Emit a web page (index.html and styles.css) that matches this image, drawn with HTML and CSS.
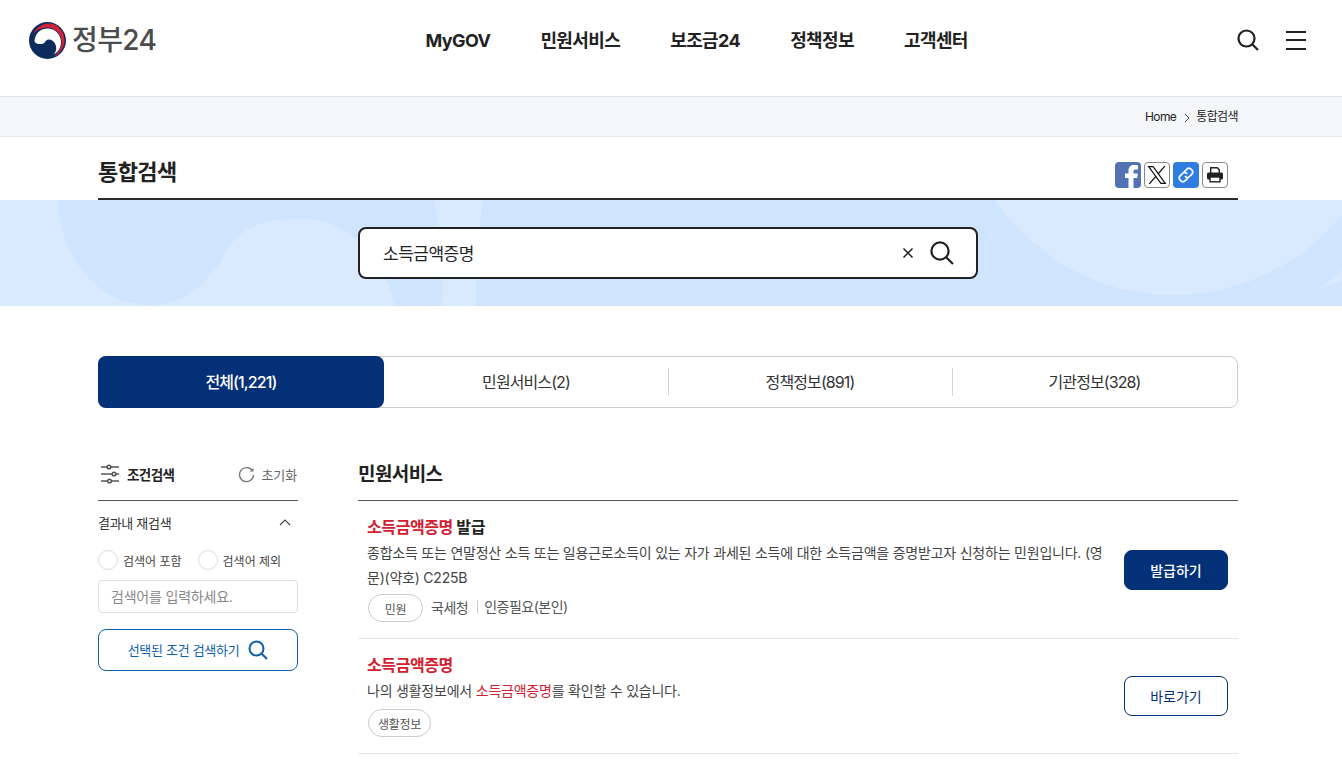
FILE: index.html
```html
<!DOCTYPE html>
<html lang="ko">
<head>
    <meta charset="UTF-8">
    <meta name="viewport" content="width=device-width, initial-scale=1.0">
    <title>정부24 통합검색</title>
    <link rel="stylesheet" href="styles.css">
</head>
<body>
    <!-- Header -->
    <header class="site-header">
        <a class="logo" href="#">
            <svg class="logo-mark" width="37" height="37" viewBox="0 0 37 37">
                <circle cx="18.5" cy="18.5" r="18.5" fill="#0b2c5c"/>
                <path d="M5.5 19 C6 11 12 6.5 18.5 6.5 C26 6.5 32 12.5 32 20 C32 25.5 29 30 25 32.5 C27.5 29 28 25 26 21.5 C24.5 18.5 21 16.5 18 18 C16 19 15.5 22 12.5 22 C9 22.3 6 21.5 5.5 19 Z" fill="#fff"/>
                <path d="M3.5 13 C6.5 6 13 1.5 20 1.5 C29 1.5 35.5 9.5 35.5 18.5 C35.5 25.5 31 32 25 35 C30 30 33 24.5 32.5 19 C32 11 25 5.5 18.5 5.5 C12 5.5 6.5 8.5 3.5 13 Z" fill="#d2213a"/>
            </svg>
            <span class="logo-text">정부24</span>
        </a>
        <nav class="main-nav">
            <a href="#">MyGOV</a>
            <a href="#">민원서비스</a>
            <a href="#">보조금24</a>
            <a href="#">정책정보</a>
            <a href="#">고객센터</a>
        </nav>
        <div class="header-tools">
            <svg width="22" height="22" viewBox="0 0 22 22" fill="none" stroke="#222" stroke-width="2.2">
                <circle cx="9.5" cy="9.5" r="8"/>
                <path d="M15.5 15.5 L21 21"/>
            </svg>
            <div class="hamburger"><span></span><span></span><span></span></div>
        </div>
    </header>

    <!-- Breadcrumb -->
    <div class="breadcrumb">
        <div class="inner breadcrumb-row">
            <span>Home</span>
            <svg width="6" height="10" viewBox="0 0 6 10" fill="none" stroke="#444"><path d="M1 1 L5 5 L1 9"/></svg>
            <span>통합검색</span>
        </div>
    </div>

    <!-- Title -->
    <div class="inner title-row">
        <h2>통합검색</h2>
        <div class="share">
            <a class="share-btn share-fb" href="#">
                <svg width="26" height="26" viewBox="0 0 26 26"><path d="M13.5 26 V16 H10 V11.5 H13.5 V8.5 C13.5 5 15.8 3 19 3 C20.8 3 22.4 3.2 23 3.3 V7.5 H20.6 C19 7.5 18.5 8.3 18.5 9.5 V11.5 H22.8 L22.2 16 H18.5 V26 Z" fill="#fff"/></svg>
            </a>
            <a class="share-btn share-line" href="#">
                <svg width="20" height="20" viewBox="0 0 18 18" fill="none" stroke="#111"><path d="M1.5 1.5 H5.5 L16.5 16.5 H12.5 Z" stroke-width="1.1"/><path d="M16 1 L10 8 M8 10.2 L2 17" stroke-width="1.2"/></svg>
            </a>
            <a class="share-btn share-link" href="#">
                <svg width="18" height="18" viewBox="0 0 18 18" fill="none" stroke="#fff" stroke-width="1.7" stroke-linecap="round"><path d="M7.5 5.5 L9.7 3.3 C11 2 13 2 14.5 3.5 C16 5 16 7 14.7 8.3 L12.5 10.5 C11.2 11.8 9.5 11.6 8.4 10.6"/><path d="M10.5 12.5 L8.3 14.7 C7 16 5 16 3.5 14.5 C2 13 2 11 3.3 9.7 L5.5 7.5 C6.8 6.2 8.5 6.4 9.6 7.4"/></svg>
            </a>
            <a class="share-btn share-line" href="#">
                <svg width="18" height="18" viewBox="0 0 18 18">
                    <path d="M4.7 7 V1.7 H11.3 L13.3 3.7 V7" fill="#fff" stroke="#222" stroke-width="1.4"/>
                    <rect x="1" y="6.5" width="16" height="7" rx="1.5" fill="#222"/>
                    <rect x="4" y="11" width="10" height="4.8" fill="#fff" stroke="#222" stroke-width="1.4"/>
                </svg>
            </a>
        </div>
    </div>

    <!-- Search banner -->
    <section class="banner">
        <svg class="banner-bg" width="1342" height="106" viewBox="0 0 1342 106">
            <path d="M0 0 H58 C60 55 95 105 150 105 C190 105 212 78 226 52 C245 18 280 19 303 19 C345 19 382 52 395 106 H0 Z" fill="#d9eafe"/>
            <path d="M434 0 H483 C478 35 476 70 476 106 H442 C443 70 442 35 434 0 Z" fill="#d9eafe"/>
            <path d="M994 0 H1342 V15 C1300 65 1240 95 1172 95 C1100 95 1040 60 994 0 Z" fill="#d9eafe"/>
            <path d="M1304 97 C1318 90 1330 85 1342 80 V70 C1332 80 1318 90 1304 97 Z" fill="#d9eafe"/>
        </svg>
        <div class="search-box">
            <span class="search-value">소득금액증명</span>
            <svg class="search-clear" width="10" height="10" viewBox="0 0 10 10" stroke="#222" stroke-width="1.5"><path d="M0.5 0.5 L9.5 9.5 M9.5 0.5 L0.5 9.5"/></svg>
            <svg width="24" height="24" viewBox="0 0 24 24" fill="none" stroke="#222" stroke-width="2.2">
                <circle cx="10" cy="10" r="8.6"/>
                <path d="M16.5 16.5 L23 23"/>
            </svg>
        </div>
    </section>

    <!-- Tabs -->
    <div class="inner tabs">
        <a class="tab active" href="#">전체(1,221)</a>
        <a class="tab" href="#">민원서비스(2)</a>
        <a class="tab" href="#">정책정보(891)</a>
        <a class="tab" href="#">기관정보(328)</a>
    </div>

    <div class="inner content">
        <!-- Sidebar -->
        <aside class="sidebar">
            <div class="side-head">
                <div class="side-title">
                    <svg width="20" height="20" viewBox="0 0 20 20" fill="none" stroke="#555" stroke-width="1.6">
                        <path d="M0 3 H18 M0 10 H18 M0 17 H18"/>
                        <circle cx="8" cy="3" r="1.8" fill="#fff"/>
                        <circle cx="13" cy="10" r="1.8" fill="#fff"/>
                        <circle cx="8.5" cy="17" r="1.8" fill="#fff"/>
                    </svg>
                    <strong>조건검색</strong>
                </div>
                <div class="side-reset">
                    <svg width="17" height="17" viewBox="0 0 17 17" fill="none" stroke="#777" stroke-width="1.4">
                        <path d="M14.5 5 A7 7 0 1 0 15.5 9"/>
                        <path d="M15.5 1.8 V5.6 H11.7" stroke-width="0" fill="#777"/>
                    </svg>
                    <span>초기화</span>
                </div>
            </div>
            <div class="side-sub">
                <span>결과내 재검색</span>
                <svg width="12" height="7" viewBox="0 0 12 7" fill="none" stroke="#444" stroke-width="1.1"><path d="M1 6 L6 1 L11 6"/></svg>
            </div>
            <div class="radios">
                <label class="radio"><i></i>검색어 포함</label>
                <label class="radio"><i></i>검색어 제외</label>
            </div>
            <input class="side-input" type="text" placeholder="검색어를 입력하세요.">
            <button class="side-btn">
                <span>선택된 조건 검색하기</span>
                <svg width="20" height="20" viewBox="0 0 20 20" fill="none" stroke="#0f5fae" stroke-width="2">
                    <circle cx="8.5" cy="8.5" r="7"/>
                    <path d="M13.7 13.7 L19 19"/>
                </svg>
            </button>
        </aside>

        <!-- Results -->
        <main class="results">
            <h3>민원서비스</h3>
            <div class="result-item">
                <div class="result-body">
                    <h4><em>소득금액증명</em> 발급</h4>
                    <p>종합소득 또는 연말정산 소득 또는 일용근로소득이 있는 자가 과세된 소득에 대한 소득금액을 증명받고자 신청하는 민원입니다. (영문)(약호) C225B</p>
                    <div class="meta">
                        <span class="pill pill-wide">민원</span>
                        <span class="meta-org">국세청</span>
                        <span class="meta-note">인증필요(본인)</span>
                    </div>
                </div>
                <a class="action primary" href="#">발급하기</a>
            </div>
            <div class="result-item short">
                <div class="result-body">
                    <h4><em>소득금액증명</em></h4>
                    <p>나의 생활정보에서 <em>소득금액증명</em>를 확인할 수 있습니다.</p>
                    <div class="meta">
                        <span class="pill">생활정보</span>
                    </div>
                </div>
                <a class="action" href="#">바로가기</a>
            </div>
        </main>
    </div>
</body>
</html>
```
FILE: styles.css
```css
/* General */
* {
    margin: 0;
    padding: 0;
    box-sizing: border-box;
}

html, body {
    height: 768px;
    overflow: hidden;
}

body {
    font-family: Inter, "Noto Sans CJK KR", "Noto Sans", sans-serif;
    color: #222;
    background: #fff;
}

a {
    color: inherit;
    text-decoration: none;
}

.inner {
    width: 1140px;
    margin-left: 98px;
}

/* Header */
.site-header {
    height: 96px;
    padding: 0 36px 16px 29px;
    display: flex;
    align-items: center;
    justify-content: space-between;
}

.logo {
    display: flex;
    align-items: center;
    gap: 6px;
}

.logo-text {
    font-size: 28px;
    font-weight: 500;
    line-height: 36px;
    letter-spacing: -0.6px;
    color: #4c4c4c;
}

.main-nav {
    display: flex;
    gap: 50px;
    margin-top: 2px;
    font-size: 18px;
    font-weight: 700;
    line-height: 26px;
    letter-spacing: -0.6px;
}

.header-tools {
    display: flex;
    align-items: center;
    gap: 27px;
}

.hamburger {
    width: 20px;
    height: 19px;
    display: flex;
    flex-direction: column;
    justify-content: space-between;
}

.hamburger span {
    height: 2px;
    background: #222;
}

/* Breadcrumb */
.breadcrumb {
    height: 41px;
    background: #f4f6fa;
    border-top: 1px solid #e3e5ea;
    border-bottom: 1px solid #e8e9ec;
}

.breadcrumb-row {
    height: 39px;
    display: flex;
    align-items: center;
    justify-content: flex-end;
    gap: 6px;
    font-size: 12px;
    line-height: 18px;
    letter-spacing: -0.6px;
}

.breadcrumb-row svg {
    margin-left: 2px;
    margin-top: 2px;
}

/* Title */
.title-row {
    height: 63px;
    padding-bottom: 10px;
    border-bottom: 2px solid #2b2b2b;
    display: flex;
    align-items: flex-end;
    justify-content: space-between;
}

.title-row h2 {
    font-size: 22px;
    font-weight: 700;
    letter-spacing: -0.6px;
    line-height: 32px;
}

.share {
    display: flex;
    gap: 3px;
    margin-right: 10px;
}

.share-btn {
    width: 26px;
    height: 26px;
    border-radius: 4px;
    display: flex;
    align-items: center;
    justify-content: center;
    overflow: hidden;
}

.share-fb {
    background: #5272b4;
}

.share-line {
    background: #fff;
    border: 1px solid #888;
}

.share-link {
    background: #2f7de1;
}

/* Search banner */
.banner {
    position: relative;
    height: 106px;
    background: #cfe5fd;
    display: flex;
    align-items: center;
    justify-content: center;
}

.banner-bg {
    position: absolute;
    left: 0;
    top: 0;
}

.search-box {
    position: relative;
    width: 620px;
    height: 52px;
    margin-left: -6px;
    padding: 0 22px 0 23px;
    background: #fff;
    border: 2px solid #222;
    border-radius: 8px;
    display: flex;
    align-items: center;
    font-size: 17px;
}

.search-value {
    flex: 1;
    padding-bottom: 2px;
    letter-spacing: -0.5px;
}

.search-clear {
    margin-right: 17px;
}

/* Tabs */
.tabs {
    height: 52px;
    margin-top: 50px;
    border: 1px solid #ccc;
    border-radius: 8px;
    display: grid;
    grid-template-columns: 285px 284px 284px 1fr;
    align-items: center;
}

.tab {
    position: relative;
    height: 52px;
    margin: -1px 0;
    padding-bottom: 2px;
    display: flex;
    align-items: center;
    justify-content: center;
    font-size: 16px;
    letter-spacing: -0.9px;
    color: #333;
}

.tab.active {
    margin-left: -1px;
    background: #033076;
    border-radius: 8px;
    color: #fff;
    font-weight: 500;
}

.tab + .tab + .tab::before {
    content: "";
    position: absolute;
    left: 0;
    top: 12px;
    height: 28px;
    border-left: 1px solid #d5d5d5;
}

/* Content */
.content {
    margin-top: 48px;
    display: flex;
    gap: 60px;
}

.sidebar {
    width: 200px;
    flex-shrink: 0;
}

.side-head {
    height: 45px;
    padding: 0 1px 8px 3px;
    border-bottom: 1px solid #555;
    display: flex;
    align-items: center;
    justify-content: space-between;
}

.side-title {
    display: flex;
    align-items: center;
    gap: 6px;
    font-size: 13.5px;
    letter-spacing: -0.6px;
}

.side-reset {
    display: flex;
    align-items: center;
    gap: 6px;
    font-size: 13px;
    letter-spacing: -0.1px;
    color: #666;
}

.side-sub {
    height: 44px;
    padding: 0 7px 2px 0;
    display: flex;
    align-items: center;
    justify-content: space-between;
    font-size: 13px;
    letter-spacing: -0.3px;
    color: #333;
}

.radios {
    display: flex;
    gap: 16px;
    margin-top: 5px;
}

.radio {
    display: flex;
    align-items: center;
    gap: 5px;
    font-size: 12px;
    color: #444;
}

.radio i {
    width: 20px;
    height: 20px;
    border: 1px solid #ddd;
    border-radius: 50%;
    background: #fff;
}

.side-input {
    display: block;
    width: 200px;
    height: 33px;
    margin-top: 10px;
    padding: 0 12px;
    border: 1px solid #ddd;
    border-radius: 4px;
    font-family: inherit;
    font-size: 14px;
    letter-spacing: -0.2px;
}

.side-input::placeholder {
    color: #888;
}

.side-btn {
    width: 200px;
    height: 42px;
    margin-top: 16px;
    padding-bottom: 1px;
    background: #fff;
    border: 1px solid #0f5fae;
    border-radius: 8px;
    color: #0f5fae;
    font-family: inherit;
    font-size: 13px;
    letter-spacing: -0.3px;
    display: flex;
    align-items: center;
    justify-content: center;
    gap: 9px;
}

/* Results */
.results {
    flex: 1;
}

.results h3 {
    height: 45px;
    border-bottom: 1px solid #555;
    font-size: 19px;
    font-weight: 700;
    letter-spacing: -0.6px;
    line-height: 38px;
}

.result-item {
    padding: 13px 10px 16px 9px;
    border-bottom: 1px solid #e5e5e5;
    display: flex;
    align-items: center;
    gap: 20px;
}

.result-body {
    flex: 1;
}

.result-body h4 {
    font-size: 16px;
    font-weight: 700;
    line-height: 26px;
    letter-spacing: -0.4px;
}

em {
    font-style: normal;
    color: #d2202f;
}

.result-body p {
    font-size: 14px;
    line-height: 25px;
    letter-spacing: -0.22px;
    color: #444;
}

.meta {
    margin-top: 4px;
    display: flex;
    align-items: center;
    font-size: 14px;
    letter-spacing: -0.5px;
    color: #555;
}

.short .meta {
    margin-top: 6px;
}

.pill {
    height: 28px;
    padding: 0 9px;
    margin-left: 1px;
    border: 1px solid #ccc;
    border-radius: 14px;
    font-size: 12px;
    letter-spacing: -0.3px;
    display: flex;
    align-items: center;
    justify-content: center;
}

.pill-wide {
    width: 55px;
}

.meta-org {
    margin-left: 8px;
    margin-bottom: 3px;
}

.meta-note {
    margin-left: 9px;
    margin-bottom: 3px;
    padding-left: 6px;
    border-left: 1px solid #ccc;
    line-height: 13px;
}

.action {
    width: 104px;
    height: 40px;
    margin-top: 3px;
    flex-shrink: 0;
    border: 1px solid #033076;
    border-radius: 8px;
    display: flex;
    align-items: center;
    justify-content: center;
    font-size: 14px;
    color: #033076;
}

.action.primary {
    background: #033076;
    color: #fff;
    font-weight: 500;
}
```
